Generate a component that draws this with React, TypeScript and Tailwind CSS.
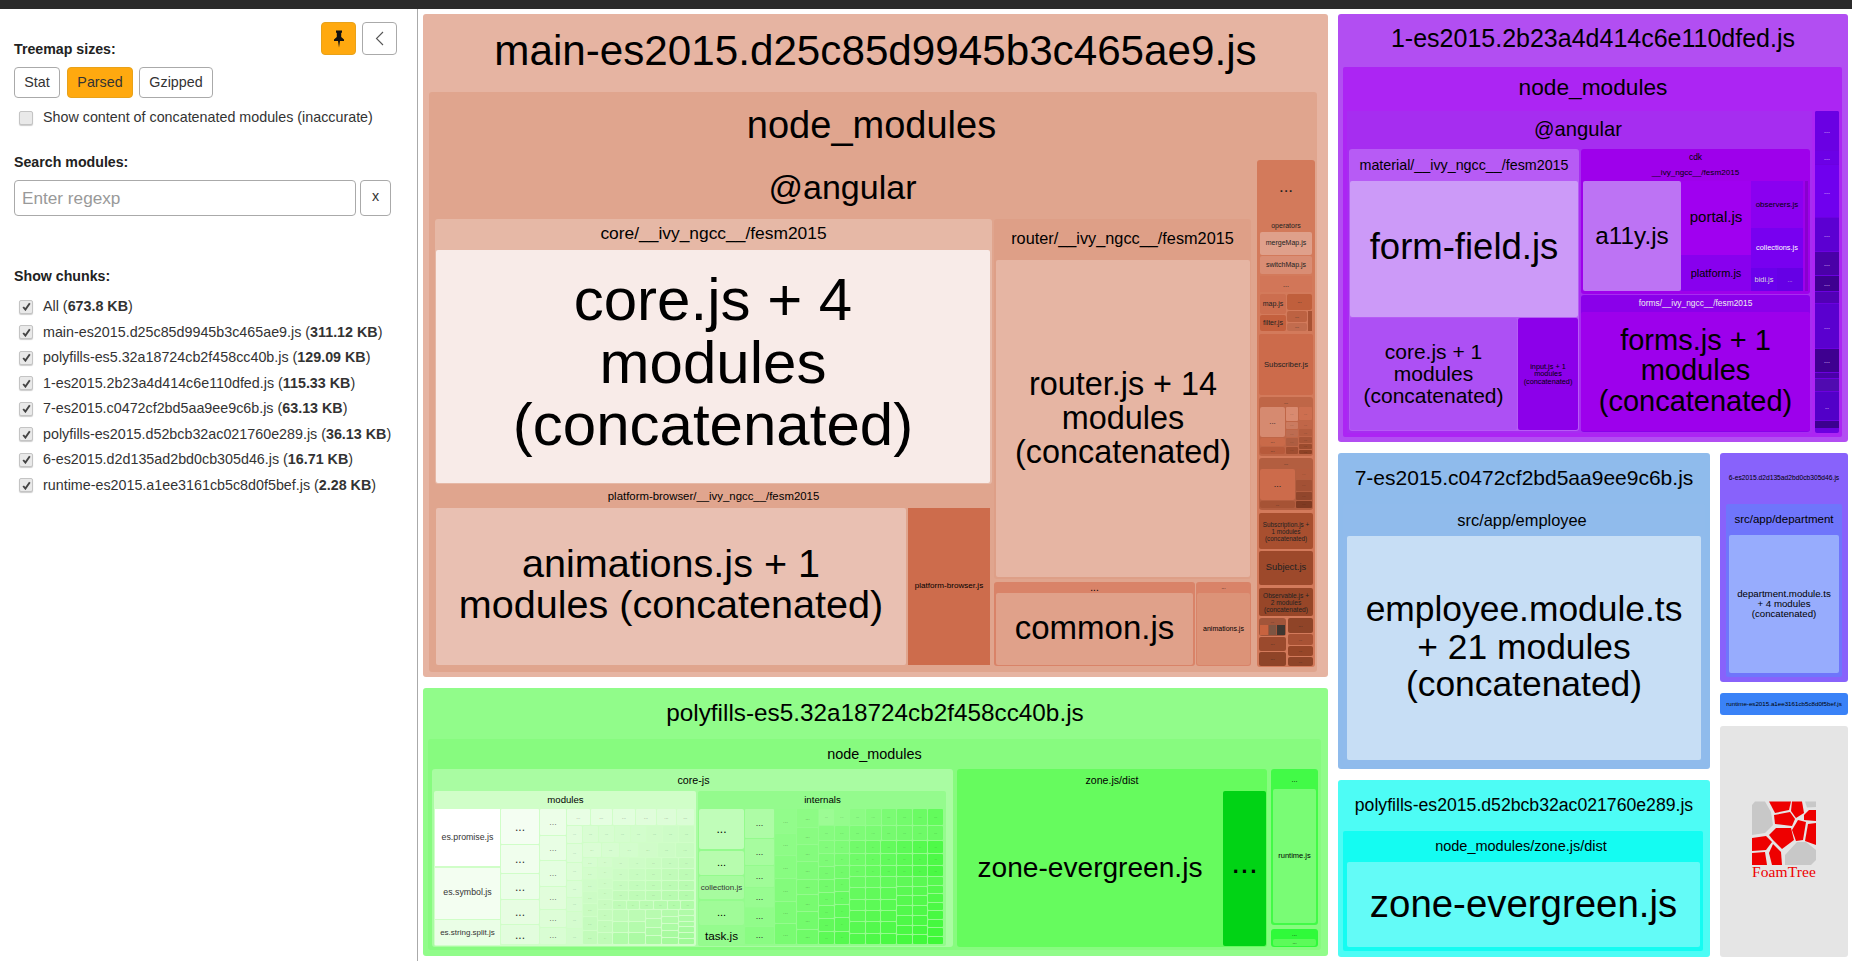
import type { ReactNode } from "react";
import clsx from "clsx";

const hex = (s: string) => [1, 3, 5].map((i) => parseInt(s.slice(i, i + 2), 16));
const mix = (a: string, b: string, t: number) => {
  const x = hex(a);
  const y = hex(b);
  return `rgb(${x.map((v, i) => Math.round(v + (y[i] - v) * t)).join(",")})`;
};

function Label({ className, children }: { className?: string; children: ReactNode }) {
  return (
    <div className={clsx("flex shrink-0 items-center justify-center text-center leading-none whitespace-nowrap", className)}>
      {children}
    </div>
  );
}

function Box({ className, children }: { className?: string; children?: ReactNode }) {
  return <div className={clsx("shrink-0 overflow-hidden rounded-[3px]", className)}>{children}</div>;
}

function Cell({ className, children }: { className?: string; children?: ReactNode }) {
  return (
    <div className={clsx("flex shrink-0 items-center justify-center overflow-hidden rounded-[2px] text-center whitespace-nowrap", className)}>
      {children}
    </div>
  );
}

// a run of little treemap tiles, sized by weight, colour stepping along the run
function Tiles({
  sizes,
  dir = "col",
  from,
  to,
  fs = 6,
  dots = "rgba(0,0,0,.55)",
  className,
}: {
  sizes: number[];
  dir?: "row" | "col";
  from: string;
  to: string;
  fs?: number;
  dots?: string;
  className?: string;
}) {
  return (
    <div className={clsx("flex gap-px", dir === "col" ? "flex-col" : "flex-row", className)}>
      {sizes.map((s, i) => (
        <div
          key={i}
          className="flex min-h-0 min-w-0 items-center justify-center overflow-hidden rounded-[1px] leading-none"
          style={{
            flexGrow: s,
            flexBasis: 0,
            background: mix(from, to, sizes.length > 1 ? i / (sizes.length - 1) : 0),
            fontSize: fs,
            color: dots,
          }}
        >
          ...
        </div>
      ))}
    </div>
  );
}

function Check() {
  return (
    <span className="flex h-[14px] w-[14px] shrink-0 items-center justify-center rounded-[2px] border border-[#c4c4c4] bg-[#e9e9e9] shadow-[0_1px_1px_rgba(0,0,0,.2)]">
      <svg width="9" height="9" viewBox="0 0 9 9">
        <path d="M1.2 5 L3.4 7.6 L7.8 1.2" fill="none" stroke="#444" strokeWidth="1.9" />
      </svg>
    </span>
  );
}

const chunks: [string, string][] = [
  ["All", "673.8 KB"],
  ["main-es2015.d25c85d9945b3c465ae9.js", "311.12 KB"],
  ["polyfills-es5.32a18724cb2f458cc40b.js", "129.09 KB"],
  ["1-es2015.2b23a4d414c6e110dfed.js", "115.33 KB"],
  ["7-es2015.c0472cf2bd5aa9ee9c6b.js", "63.13 KB"],
  ["polyfills-es2015.d52bcb32ac021760e289.js", "36.13 KB"],
  ["6-es2015.d2d135ad2bd0cb305d46.js", "16.71 KB"],
  ["runtime-es2015.a1ee3161cb5c8d0f5bef.js", "2.28 KB"],
];

function Sidebar() {
  return (
    <div className="relative h-full w-[418px] shrink-0 border-r border-[#aaa] bg-white pl-[14px] text-[14.3px] text-[#333]">
      <button className="absolute top-[13px] left-[321px] flex h-[33px] w-[35px] items-center justify-center rounded-[4px] border border-[#e8a21a] bg-[#ffa90f]">
        <svg width="12" height="18" viewBox="0 0 12 18">
          <path d="M3 0.5 H9 V2.4 L8.2 3 V7 L11 9.6 V11 H7 L6 17.5 L5 11 H1 V9.6 L3.8 7 V3 L3 2.4 Z" fill="#111" />
        </svg>
      </button>
      <button className="absolute top-[13px] left-[362px] flex h-[33px] w-[35px] items-center justify-center rounded-[4px] border border-[#aaa] bg-white">
        <svg width="9" height="15" viewBox="0 0 9 15">
          <path d="M8 1 L1.5 7.5 L8 14" fill="none" stroke="#555" strokeWidth="1.1" />
        </svg>
      </button>

      <div className="mt-[31px] text-[14.2px] leading-[18px] font-bold text-[#222]">Treemap sizes:</div>
      <div className="mt-[9px] flex h-[31px]">
        <span className="flex w-[46px] items-center justify-center rounded-[4px] border border-[#aaa]">Stat</span>
        <span className="ml-[7px] flex w-[66px] items-center justify-center rounded-[4px] border border-[#e8a21a] bg-[#ffa90f]">Parsed</span>
        <span className="ml-[6px] flex w-[74px] items-center justify-center rounded-[4px] border border-[#aaa]">Gzipped</span>
      </div>
      <div className="mt-[11px] flex h-[18px] items-center pl-[5px]">
        <span className="h-[14px] w-[14px] shrink-0 rounded-[2px] border border-[#c4c4c4] bg-[#e9e9e9] shadow-[0_1px_1px_rgba(0,0,0,.2)]" />
        <span className="ml-[10px]">Show content of concatenated modules (inaccurate)</span>
      </div>

      <div className="mt-[26px] text-[14.2px] leading-[18px] font-bold text-[#222]">Search modules:</div>
      <div className="mt-[9px] flex h-[36px] gap-[4px]">
        <input
          placeholder="Enter regexp"
          className="w-[342px] rounded-[4px] border border-[#aaa] px-[7px] pt-px text-[17.2px] outline-none placeholder:text-[#999]"
        />
        <span className="flex w-[31px] items-center justify-center rounded-[4px] border border-[#aaa] pb-[2px]">x</span>
      </div>

      <div className="mt-[51px] text-[14.2px] leading-[18px] font-bold text-[#222]">Show chunks:</div>
      <div className="mt-[9px] flex flex-col">
        {chunks.map(([name, size]) => (
          <div key={name} className="flex h-[25.5px] items-center pl-[5px]">
            <Check />
            <span className="ml-[10px] whitespace-nowrap">
              {name} (<b>{size}</b>)
            </span>
          </div>
        ))}
      </div>
    </div>
  );
}

function MainSideColumn() {
  return (
    <div className="flex h-[507px] w-[58px] shrink-0 flex-col overflow-hidden rounded-[3px] bg-[#d37a5b] px-[2px] text-[#222]">
      <Label className="h-[58px] pb-[5px] text-[17px]">...</Label>
      <Label className="h-[14px] text-[7px]">operators</Label>
      <div className="flex flex-col gap-px px-px">
        <Cell className="h-[23px] bg-[#dfa08b] text-[7px]">mergeMap.js</Cell>
        <Cell className="h-[18px] bg-[#d98d74] text-[7px]">switchMap.js</Cell>
        <Label className="mt-px h-[16px] bg-[#d27658] text-[7px]">...</Label>
        <div className="mt-px flex h-[37px] gap-px">
          <div className="flex w-[26px] flex-col gap-px">
            <Cell className="h-[20px] bg-[#cc6e4f] text-[7px]">map.js</Cell>
            <Cell className="h-[16px] bg-[#c4603e] text-[7px]">filter.js</Cell>
          </div>
          <div className="flex flex-1 flex-col gap-px">
            <Cell className="h-[16px] bg-[#c05f3c] text-[5px]">...</Cell>
            <div className="flex h-[20px] gap-px">
              <div className="flex flex-1 flex-col gap-px">
                <Cell className="h-[11px] bg-[#bd6242] text-[5px]">...</Cell>
                <Cell className="h-[8px] bg-[#c26c4e] text-[5px]">...</Cell>
              </div>
              <div className="w-[4px] bg-[#a85234]" />
            </div>
          </div>
        </div>
      </div>
      <Cell className="mt-[3px] h-[61px] bg-[#cc6b4b] text-[7.7px]">Subscriber.js</Cell>
      <Box className="mt-[2px] h-[59px] bg-[#bf6647]">
        <Label className="h-[10px] text-[5px]">...</Label>
        <div className="flex h-[47px] gap-px px-px">
          <div className="flex w-[25px] flex-col gap-px">
            <Cell className="h-[30px] bg-[#d68a70] text-[8px]">...</Cell>
            <Cell className="h-[8px] bg-[#c96a49] text-[5px]">...</Cell>
            <Cell className="h-[7px] bg-[#b75a3b] text-[5px]">...</Cell>
          </div>
          <Tiles sizes={[13, 7, 7, 7, 7]} from="#d98a70" to="#a04e31" fs={4} className="w-[12px]" />
          <Tiles sizes={[13, 7, 6, 6, 5, 4]} from="#cd6f50" to="#8e4226" fs={4} className="w-[13px]" />
        </div>
      </Box>
      <Box className="mt-[2px] h-[52px] bg-[#b35e40]">
        <Label className="h-[11px] text-[5px]">...</Label>
        <div className="flex h-[39px] gap-px px-px">
          <div className="flex w-[35px] flex-col gap-px">
            <Cell className="h-[31px] bg-[#cc6b4b] text-[9px]">...</Cell>
            <Cell className="h-[7px] bg-[#a65335] text-[4px]">...</Cell>
          </div>
          <Tiles sizes={[10, 10, 8, 7]} from="#b55d3f" to="#7f3a22" fs={4} className="flex-1" />
        </div>
      </Box>
      <Cell className="mt-[3px] h-[36px] bg-[#a84f2f] text-[6.3px] leading-[7px]">
        Subscription.js +<br />1 modules<br />(concatenated)
      </Cell>
      <Cell className="mt-[2px] h-[34px] bg-[#9d492b] text-[9.3px]">Subject.js</Cell>
      <Cell className="mt-[3px] h-[28px] bg-[#974628] text-[6.6px] leading-[7px]">
        Observable.js +<br />2 modules<br />(concatenated)
      </Cell>
      <div className="mt-[2px] flex h-[48px] gap-[2px]">
        <div className="flex w-[27px] flex-col gap-[1px]">
          <Box className="h-[18px] bg-[#a1553a]">
            <Label className="h-[7px] text-[4px]">...</Label>
            <div className="flex h-[10px] gap-px px-px">
              <div className="flex-1 bg-[#c8633f]" />
              <div className="flex-1 bg-[#7d5542]" />
              <div className="flex-1 bg-[#3f3630]" />
            </div>
          </Box>
          <Cell className="h-[14px] bg-[#9b4a2d] text-[5px]">...</Cell>
          <Cell className="h-[14px] bg-[#8f4428] text-[5px]">...</Cell>
        </div>
        <div className="flex flex-1 flex-col gap-[1px]">
          <Cell className="h-[15px] bg-[#8f4428] text-[5px]">...</Cell>
          <Cell className="h-[11px] bg-[#a85234] text-[4px]">...</Cell>
          <Cell className="h-[10px] bg-[#974628] text-[4px]">...</Cell>
          <Cell className="h-[9px] bg-[#8f4428] text-[4px]">...</Cell>
        </div>
      </div>
    </div>
  );
}

function MainChunk() {
  return (
    <Box className="h-[663px] w-[905px] bg-[#e6b4a2] pl-[6px]">
      <Label className="h-[78px] pr-[6px] pb-[3px] text-[42.2px]">main-es2015.d25c85d9945b3c465ae9.js</Label>
      <div className="h-[580px] w-[888px] rounded-[3px] bg-[#e0a58e]">
        <Label className="h-[68px] pr-[3px] pb-[3px] text-[38px]">node_modules</Label>
        <div className="flex">
          <div className="w-[828px] shrink-0 pl-[6px]">
            <Label className="h-[59px] pr-[7px] pb-[5px] text-[34px]">@angular</Label>
            <div className="flex gap-[2px]">
              <div className="w-[557px] shrink-0">
                <Box className="h-[265px] bg-[#e6b8a6]">
                  <Label className="h-[31px] pb-[2px] text-[17.4px]">core/__ivy_ngcc__/fesm2015</Label>
                  <Cell className="ml-px h-[233px] w-[554px] bg-[#f8ebe8] pb-[7px] text-[60px] leading-[62.5px]">
                    core.js + 4<br />modules<br />(concatenated)
                  </Cell>
                </Box>
                <div className="h-[183px]">
                  <Label className="h-[24px] pt-[2px] text-[11.4px]">platform-browser/__ivy_ngcc__/fesm2015</Label>
                  <div className="ml-px flex gap-[2px]">
                    <Cell className="h-[157px] w-[470px] bg-[#e9c0b2] pb-[6px] text-[39.6px] leading-[41px]">
                      animations.js + 1<br />modules (concatenated)
                    </Cell>
                    <Cell className="h-[157px] w-[82px] rounded-none bg-[#cd6c4c] text-[8.1px]">platform-browser.js</Cell>
                  </div>
                </div>
              </div>
              <div className="w-[257px] shrink-0">
                <Box className="h-[360px] bg-[#de9f87]">
                  <Label className="h-[41px] pb-[2px] text-[16.3px]">router/__ivy_ngcc__/fesm2015</Label>
                  <Cell className="ml-[2px] h-[317px] w-[254px] bg-[#e6b5a3] pb-[2px] text-[32.4px] leading-[34px]">
                    router.js + 14<br />modules<br />(concatenated)
                  </Cell>
                </Box>
                <div className="mt-[3px] flex h-[84px] gap-px">
                  <Box className="w-[201px] bg-[#d98368]">
                    <Label className="h-[11px] text-[10px]">...</Label>
                    <Cell className="ml-[2px] h-[72px] w-[197px] bg-[#e0a18a] pb-[2px] text-[33px]">common.js</Cell>
                  </Box>
                  <Box className="w-[55px] bg-[#d98368]">
                    <Label className="h-[11px] text-[5px]">...</Label>
                    <Cell className="ml-px h-[72px] w-[53px] bg-[#dc9378] text-[7px]">animations.js</Cell>
                  </Box>
                </div>
              </div>
            </div>
          </div>
          <MainSideColumn />
        </div>
      </div>
    </Box>
  );
}

function ModulesBlock() {
  return (
    <div className="h-[155px] w-[262px] shrink-0 overflow-hidden rounded-[2px] bg-[#d0fec8] pl-px">
      <Label className="h-[18px] text-[9.6px]">modules</Label>
      <div className="flex h-[135px] gap-px">
        <div className="flex w-[65px] shrink-0 flex-col gap-[1.5px] text-[#333]">
          <Cell className="h-[57px] rounded-none bg-white text-[8.8px]">es.promise.js</Cell>
          <Cell className="h-[51px] rounded-none bg-[#f3fef1] text-[8.8px]">es.symbol.js</Cell>
          <Cell className="h-[25px] rounded-none bg-[#eafee6] text-[8px]">es.string.split.js</Cell>
        </div>
        <Tiles sizes={[35, 28, 25, 24, 19]} from="#f4fef2" to="#e2fddd" fs={12} dots="#333" className="w-[38px] shrink-0" />
        <Tiles sizes={[26, 24, 24, 22, 17, 16]} from="#ecfee8" to="#d9fdd3" fs={9} className="w-[26px] shrink-0" />
        <div className="flex w-[127px] shrink-0 flex-col gap-px">
          <Tiles sizes={[22, 21, 21, 20, 18, 17]} dir="row" from="#e8fee4" to="#dafdd5" fs={5} className="h-[16px] shrink-0" />
          <div className="flex flex-1 gap-px">
            <Tiles sizes={[16, 17, 16, 15, 13, 15, 14]} from="#e2fddd" to="#d2fccc" fs={4} className="w-[15px] shrink-0" />
            <div className="flex flex-1 flex-col gap-px">
              <Tiles sizes={[1, 1, 1, 1, 1, 1, 1]} dir="row" from="#d9fdd3" to="#cbfcc4" fs={4} className="h-[16px] shrink-0" />
              <Tiles sizes={[1, 1, 1, 1, 1, 1]} dir="row" from="#dbfdd5" to="#c8fcc1" fs={4} className="h-[14px] shrink-0" />
              <div className="flex flex-1 gap-px">
                <Tiles sizes={[9, 11, 11, 11, 12, 13, 13]} from="#d6fdd0" to="#c2fbba" fs={4} className="w-[14px] shrink-0" />
                <Tiles sizes={[9, 10, 9, 10, 10, 10, 11, 11]} from="#d4fccd" to="#bffbb7" fs={3} className="w-[14px] shrink-0" />
                <div className="flex flex-1 flex-col gap-px">
                  <Tiles sizes={[1, 1, 1, 1, 1]} dir="row" from="#d0fcc9" to="#c3fbbb" fs={3} className="h-[10px] shrink-0" />
                  <Tiles sizes={[1, 1, 1, 1, 1]} dir="row" from="#ccfcc5" to="#bdfbb5" fs={3} className="h-[11px] shrink-0" />
                  <Tiles sizes={[1, 1, 1, 1, 1]} dir="row" from="#c7fcc0" to="#b8fbb0" fs={3} className="h-[9px] shrink-0" />
                  <Tiles sizes={[1, 1, 1, 1, 1]} dir="row" from="#c3fbbb" to="#b4fbac" fs={3} className="h-[9px] shrink-0" />
                  <Tiles sizes={[1, 1, 1, 1, 1, 1]} dir="row" from="#bffbb7" to="#b0fba8" fs={3} className="h-[8px] shrink-0" />
                  <div className="flex flex-1 gap-px">
                    <Tiles sizes={[1, 1, 1]} from="#c0fbb8" to="#b0fba8" fs={2} className="flex-1" />
                    <Tiles sizes={[1, 1, 1]} from="#bcfbb4" to="#acfaa4" fs={2} className="flex-1" />
                    <Tiles sizes={[1, 1, 1, 1]} from="#b8fbb0" to="#a8faa0" fs={2} className="flex-1" />
                    <Tiles sizes={[1, 1, 1, 1, 1]} from="#b4fbac" to="#a4fa9c" fs={2} className="flex-1" />
                    <Tiles sizes={[1, 1, 1, 1, 1, 1]} from="#b0fba8" to="#a0fa98" fs={2} className="flex-1" />
                  </div>
                </div>
              </div>
            </div>
          </div>
        </div>
      </div>
    </div>
  );
}

function InternalsBlock() {
  return (
    <div className="h-[155px] w-[248px] shrink-0 overflow-hidden rounded-[2px] bg-[#94fb8d] pl-px">
      <Label className="h-[18px] text-[9.7px]">internals</Label>
      <div className="flex h-[135px] gap-px">
        <div className="flex w-[45px] shrink-0 flex-col gap-[1.5px]">
          <Cell className="h-[40px] bg-[#c0fdb9] text-[12px]">...</Cell>
          <Cell className="h-[24px] bg-[#b7fcae] text-[11px]">...</Cell>
          <Cell className="h-[23px] bg-[#a7fb9f] text-[8px] text-[#333]">collection.js</Cell>
          <Cell className="h-[24px] bg-[#a0fb98] text-[11px]">...</Cell>
          <Cell className="h-[20px] bg-[#95fb8e] text-[11.7px]">task.js</Cell>
        </div>
        <Tiles sizes={[29, 26, 20, 19, 18, 17]} from="#aefca6" to="#8afc83" fs={9} dots="#333" className="w-[29px] shrink-0" />
        <Tiles sizes={[12, 11, 11, 11, 11, 10]} from="#92fc8b" to="#79fb72" fs={6} className="w-[21px] shrink-0" />
        <Tiles sizes={[10, 9, 9, 9, 8, 9, 9, 8]} from="#8dfb85" to="#6ffb68" fs={5} className="w-[21px] shrink-0" />
        <div className="flex w-[124px] shrink-0 flex-col gap-px">
          <Tiles sizes={[1, 1, 1, 1, 1, 1, 1, 1]} dir="row" from="#9cfb94" to="#63fb5c" fs={4} className="h-[16px] shrink-0" />
          <Tiles sizes={[1, 1, 1, 1, 1, 1, 1, 1]} dir="row" from="#86fb7f" to="#6afa63" fs={4} className="h-[14px] shrink-0" />
          <div className="flex flex-1 gap-px">
            <Tiles sizes={[12, 12, 12, 12, 12, 12, 12, 12]} from="#82fb7b" to="#5df956" fs={3} className="w-[15px] shrink-0" />
            <Tiles sizes={[12, 11, 11, 12, 12, 12, 12, 12]} from="#7dfb76" to="#55f94f" fs={3} className="w-[14px] shrink-0" />
            <div className="flex flex-1 flex-col gap-px">
              <Tiles sizes={[1, 1, 1, 1, 1, 1]} dir="row" from="#71fa6a" to="#4efa48" fs={3} className="h-[12px] shrink-0" />
              <Tiles sizes={[1, 1, 1, 1, 1, 1]} dir="row" from="#6ffb68" to="#4df947" fs={3} className="h-[11px] shrink-0" />
              <Tiles sizes={[1, 1, 1, 1, 1, 1]} dir="row" from="#6cfb65" to="#4af944" fs={3} className="h-[10px] shrink-0" />
              <div className="flex flex-1 gap-px">
                <Tiles sizes={[1, 1, 1, 1, 1, 1]} from="#6afa63" to="#52f94c" fs={2} className="flex-1" />
                <Tiles sizes={[1, 1, 1, 1, 1, 1]} from="#66fa5f" to="#4ef948" fs={2} className="flex-1" />
                <Tiles sizes={[1, 1, 1, 1, 1, 1]} from="#62fa5b" to="#4af944" fs={2} className="flex-1" />
                <Tiles sizes={[1, 1, 1, 1, 1, 1, 1]} from="#5ef957" to="#46f940" fs={2} className="flex-1" />
                <Tiles sizes={[1, 1, 1, 1, 1, 1, 1]} from="#5af953" to="#42f93c" fs={2} className="flex-1" />
                <Tiles sizes={[1, 1, 1, 1, 1, 1, 1, 1]} from="#56f94f" to="#3ef938" fs={2} className="flex-1" />
              </div>
            </div>
          </div>
        </div>
      </div>
    </div>
  );
}

function PolyfillsChunk() {
  return (
    <Box className="mt-[11px] h-[268px] w-[905px] bg-[#91fc8a] pl-[5px]">
      <Label className="h-[51px] pr-[6px] text-[24.3px]">polyfills-es5.32a18724cb2f458cc40b.js</Label>
      <div className="h-[211px] w-[893px] rounded-[3px] bg-[#87fb7f] pl-[4px]">
        <Label className="h-[30px] pr-[4px] text-[14.4px]">node_modules</Label>
        <div className="flex gap-[4px]">
          <Box className="h-[178px] w-[521px] bg-[#a9fca2] pl-[2px]">
            <Label className="h-[22px] text-[10.7px]">core-js</Label>
            <div className="flex gap-[2px]">
              <ModulesBlock />
              <InternalsBlock />
            </div>
          </Box>
          <Box className="h-[178px] w-[310px] bg-[#66fb5e]">
            <Label className="h-[22px] text-[10.6px]">zone.js/dist</Label>
            <div className="flex">
              <Cell className="h-[155px] w-[266px] text-[28.1px]">zone-evergreen.js</Cell>
              <Cell className="h-[155px] w-[43px] bg-[#01d315] pb-[14px] text-[32px]">...</Cell>
            </div>
          </Box>
          <div className="flex w-[47px] shrink-0 flex-col gap-[4px]">
            <Box className="h-[156px] bg-[#42fa47] px-[2px]">
              <Label className="h-[20px] text-[7px]">...</Label>
              <Cell className="h-[134px] bg-[#79fc75] text-[7.5px]">runtime.js</Cell>
            </Box>
            <Box className="h-[18px] bg-[#2ffa3a] px-[2px]">
              <Label className="h-[10px] text-[6px]">...</Label>
              <Cell className="h-[7px] bg-[#5cfb59] text-[5px]">...</Cell>
            </Box>
          </div>
        </div>
      </div>
    </Box>
  );
}

function PurpleSide() {
  const cells: [string, string][] = [
    ["h-[39px] bg-[#6a00e3]", "..."],
    ["h-[13px] bg-[#6c00e6]", "..."],
    ["h-[52px] bg-[#7000ee]", "..."],
    ["h-[33px] bg-[#5c00d2]", "..."],
    ["h-[23px] bg-[#4a00a8]", "..."],
    ["h-[15px] bg-[#3e0090]", "..."],
    ["h-[11px] bg-[#5100b5]", ""],
    ["h-[44px] bg-[#5a00cf]", "..."],
    ["h-[23px] bg-[#3e0090]", "..."],
    ["h-[5px] bg-[#4a00a8]", ""],
    ["h-[12px] bg-[#500bb0]", ""],
    ["h-[28px] bg-[#5200c8]", ".."],
    ["h-[7px] bg-[#3c0090]", ""],
  ];
  return (
    <div className="ml-[3px] flex h-[322px] w-[24px] shrink-0 flex-col gap-px overflow-hidden rounded-[2px] bg-[#6c00e0]">
      {cells.map(([cls, text], i) => (
        <Label key={i} className={clsx(cls, "text-[7px] text-[#e8d0ff]")}>
          {text}
        </Label>
      ))}
    </div>
  );
}

function PurpleChunk() {
  return (
    <Box className="h-[428px] w-[510px] bg-[#b24ef2] pl-[5px]">
      <Label className="h-[53px] pr-[5px] pb-[4px] text-[25px]">1-es2015.2b23a4d414c6e110dfed.js</Label>
      <div className="h-[370px] w-[499px] rounded-[2px] bg-[#ac25f3] pl-[4px]">
        <Label className="h-[44px] pr-[3px] pb-[3px] text-[22.7px]">node_modules</Label>
        <div className="flex">
          <div className="h-[322px] w-[465px] shrink-0 bg-[#a62df0] pl-[2px]">
            <Label className="h-[38px] pr-[5px] pb-[2px] text-[20.2px]">@angular</Label>
            <div className="flex gap-[2px]">
              <Box className="h-[282px] w-[230px] bg-[#b75bf5] px-px">
                <Label className="h-[32px] text-[14.3px]">material/__ivy_ngcc__/fesm2015</Label>
                <Cell className="h-[136px] w-[228px] bg-[#cc9af8] pb-[3px] text-[36.5px]">form-field.js</Cell>
                <div className="mt-px flex gap-px">
                  <Cell className="h-[112px] w-[167px] bg-[#ad50f4] text-[21px] leading-[22px]">
                    core.js + 1<br />modules<br />(concatenated)
                  </Cell>
                  <Cell className="h-[112px] w-[60px] bg-[#8c00ea] text-[7.3px] leading-[7.5px]">
                    input.js + 1<br />modules<br />(concatenated)
                  </Cell>
                </div>
              </Box>
              <div className="w-[229px] shrink-0">
                <Box className="h-[145px] bg-[#9e00eb]">
                  <Label className="h-[16px] text-[8.4px]">cdk</Label>
                  <Label className="h-[16px] text-[8.1px]">__ivy_ngcc__/fesm2015</Label>
                  <div className="flex pl-[2px]">
                    <Cell className="h-[110px] w-[98px] bg-[#bd73f4] text-[24.3px]">a11y.js</Cell>
                    <div className="w-[70px] shrink-0">
                      <Label className="h-[74px] bg-[#a000f0] pb-[3px] text-[15px]">portal.js</Label>
                      <Label className="h-[36px] bg-[#8800ee] text-[11px]">platform.js</Label>
                    </div>
                    <div className="w-[52px] shrink-0">
                      <Label className="h-[47px] bg-[#8a00f0] text-[7.9px]">observers.js</Label>
                      <Label className="h-[40px] bg-[#7800f0] text-[7.4px] text-white">collections.js</Label>
                      <div className="flex h-[23px]">
                        <Label className="w-[26px] bg-[#6a00eb] text-[7.4px] text-[#ddd]">bidi.js</Label>
                        <Label className="w-[26px] bg-[#6600e5] text-[6px] text-[#ddd]">...</Label>
                      </div>
                    </div>
                    <div className="ml-[2px] w-[3px] bg-[#8800cf]" />
                  </div>
                </Box>
                <Box className="mt-px h-[137px] bg-[#8a00ea]">
                  <Label className="h-[17px] text-[8.4px] text-[#eee]">forms/__ivy_ngcc__/fesm2015</Label>
                  <Cell className="h-[119px] w-[229px] bg-[#9d00ec] pb-[2px] text-[29px] leading-[30.5px]">
                    forms.js + 1<br />modules<br />(concatenated)
                  </Cell>
                </Box>
              </div>
            </div>
          </div>
          <PurpleSide />
        </div>
      </div>
    </Box>
  );
}

function FoamTreeLogo() {
  const red: string[] = [
    "17,0.5 39,0.5 37,9 23,12",
    "40,0.5 50,0.5 52,12 44,17 39,10",
    "22,14 38,11 43,18 40,25 23,23",
    "52,14 57,9 64,9 64,20 52,19",
    "40,29 46,19 54,21 51,39 44,40",
    "56,23 64,22 64,44 53,40",
    "17,34 24,27 39,27 42,39 30,48 21,39",
    "0,37 14,35 20,41 14,49 0,50",
    "0,52 13,51 15,64 0,64",
    "17,52 21,43 29,51 30,64 20,64",
  ];
  const grey: string[] = [
    "0,34 13,32 21,24 19,11 13,0.5 3,0.5 0,4",
    "53,0.5 64,0.5 64,6 55,6.5",
    "33,64 33,54 45,41 54,41 64,49 64,59 59,64",
  ];
  return (
    <div className="flex w-[64px] flex-col items-center">
      <svg width="64" height="64" viewBox="0 0 64 64">
        {grey.map((p) => (
          <polygon key={p} points={p} fill="#c8c8c8" />
        ))}
        {red.map((p) => (
          <polygon key={p} points={p} fill="#ee0000" />
        ))}
      </svg>
      <span className="font-['Liberation_Serif',serif] text-[15.5px] leading-[14px] tracking-[0.1px] text-[#ee0000]">FoamTree</span>
    </div>
  );
}

function RightColumn() {
  return (
    <div className="ml-[10px] flex w-[510px] shrink-0 flex-col gap-[11px]">
      <PurpleChunk />
      <div className="flex gap-[10px]">
        <div className="flex w-[372px] shrink-0 flex-col gap-[11px]">
          <Box className="h-[316px] bg-[#8fbbec] pl-[5px]">
            <Label className="h-[51px] pr-[5px] pb-[2px] text-[21px]">7-es2015.c0472cf2bd5aa9ee9c6b.js</Label>
            <div className="h-[261px] w-[362px] rounded-[2px] bg-[#90bbec] pl-[4px]">
              <Label className="h-[32px] pr-[8px] text-[16.4px]">src/app/employee</Label>
              <Cell className="h-[224px] w-[354px] bg-[#c7def5] pb-[1px] text-[35.4px] leading-[37.4px]">
                employee.module.ts<br />+ 21 modules<br />(concatenated)
              </Cell>
            </div>
          </Box>
          <Box className="h-[177px] bg-[#4dfcf5] pl-[5px]">
            <Label className="h-[51px] pr-[5px] text-[17.65px]">polyfills-es2015.d52bcb32ac021760e289.js</Label>
            <div className="h-[120px] w-[360px] rounded-[2px] bg-[#14fcf2] pl-[4px]">
              <Label className="h-[31px] pr-[8px] text-[14.5px]">node_modules/zone.js/dist</Label>
              <Cell className="h-[85px] w-[353px] bg-[#63fbf7] pb-[2px] text-[38.4px]">zone-evergreen.js</Cell>
            </div>
          </Box>
        </div>
        <div className="flex w-[128px] shrink-0 flex-col gap-[11px]">
          <Box className="h-[229px] bg-[#8862fb] pl-[6px]">
            <Label className="h-[51px] pr-[6px] text-[6.7px]">6-es2015.d2d135ad2bd0cb305d46.js</Label>
            <div className="h-[173px] w-[116px] rounded-[2px] bg-[#6f75fb] pl-[3px]">
              <Label className="h-[31px] pr-[3px] text-[11.5px]">src/app/department</Label>
              <Cell className="h-[138px] w-[110px] bg-[#97acfd] text-[9.7px] leading-[10px]">
                department.module.ts<br />+ 4 modules<br />(concatenated)
              </Cell>
            </div>
          </Box>
          <Label className="h-[22px] rounded-[3px] bg-[#3a82f7] text-[6.2px]">runtime-es2015.a1ee3161cb5c8d0f5bef.js</Label>
          <div className="flex h-[231px] items-center justify-center rounded-[3px] bg-[#e5e5e5] pb-[3px]">
            <FoamTreeLogo />
          </div>
        </div>
      </div>
    </div>
  );
}

export default function App() {
  return (
    <div className="flex h-[961px] w-[1852px] flex-col overflow-hidden bg-white font-['Liberation_Sans',Arial,sans-serif] text-black">
      <div className="h-[9px] shrink-0 bg-[#2b2b2b]" />
      <div className="flex min-h-0 flex-1">
        <Sidebar />
        <div className="flex pt-[5px] pl-[5px]">
          <div className="w-[905px] shrink-0">
            <MainChunk />
            <PolyfillsChunk />
          </div>
          <RightColumn />
        </div>
      </div>
    </div>
  );
}
